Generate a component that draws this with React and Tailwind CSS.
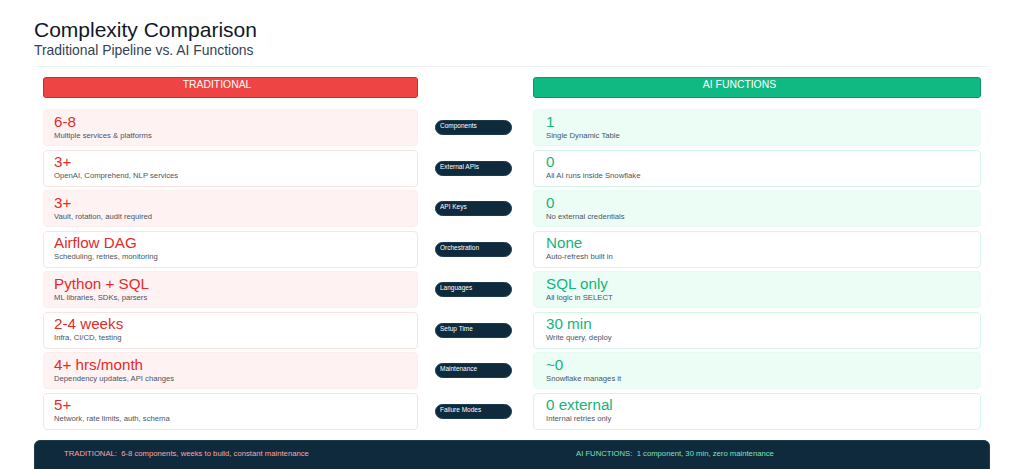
import React from 'react';

const rows = [
  { label: 'Components', old: '6-8', oldNote: 'Multiple services & platforms', ai: '1', aiNote: 'Single Dynamic Table' },
  { label: 'External APIs', old: '3+', oldNote: 'OpenAI, Comprehend, NLP services', ai: '0', aiNote: 'All AI runs inside Snowflake' },
  { label: 'API Keys', old: '3+', oldNote: 'Vault, rotation, audit required', ai: '0', aiNote: 'No external credentials' },
  { label: 'Orchestration', old: 'Airflow DAG', oldNote: 'Scheduling, retries, monitoring', ai: 'None', aiNote: 'Auto-refresh built in' },
  { label: 'Languages', old: 'Python + SQL', oldNote: 'ML libraries, SDKs, parsers', ai: 'SQL only', aiNote: 'All logic in SELECT' },
  { label: 'Setup Time', old: '2-4 weeks', oldNote: 'Infra, CI/CD, testing', ai: '30 min', aiNote: 'Write query, deploy' },
  { label: 'Maintenance', old: '4+ hrs/month', oldNote: 'Dependency updates, API changes', ai: '~0', aiNote: 'Snowflake manages it' },
  { label: 'Failure Modes', old: '5+', oldNote: 'Network, rate limits, auth, schema', ai: '0 external', aiNote: 'Internal retries only' },
];

function Card({ value, note, tinted, side }) {
  const red = side === 'old';
  const box = red
    ? tinted
      ? 'bg-[#fef2f2] border-[#fdeeee]'
      : 'bg-white border-[#fde1e1]'
    : tinted
      ? 'bg-[#ecfdf5] border-[#e6fbf1]'
      : 'bg-white border-[#d3f6e6]';
  return (
    <div className={`h-[37px] rounded border pt-[2.5px] ${red ? 'pl-[10px]' : 'pl-[12px]'} ${box}`}>
      <div className={`text-[15.2px] leading-[18px] ${red ? 'text-[#e42a2a]' : 'text-[#14b47c]'}`}>{value}</div>
      <div className="text-[7.7px] leading-[10px] text-[#4b5563]">{note}</div>
    </div>
  );
}

export default function App() {
  return (
    <div className="w-[1024px] h-[469px] overflow-hidden bg-white font-['Liberation_Sans',Arial,sans-serif]">
      <div className="mx-[34px] w-[956px] pt-[18px]">
        {/* Title */}
        <h1 className="text-[21px] leading-[23px] text-[#111827]">Complexity Comparison</h1>
        <p className="text-[13.9px] leading-[18px] text-[#334155]">Traditional Pipeline vs. AI Functions</p>
        <div className="mt-[7px] h-px bg-[#edf2f3]" />

        {/* Headers */}
        <div className="mt-[10px] flex pl-[9px]">
          <div className="w-[375px] h-[21px] rounded-[3px] border border-[#dc2626] bg-[#ef4444] pr-[27px] text-center text-[10.4px] leading-[14px] text-white">
            TRADITIONAL
          </div>
          <div className="w-[115px]" />
          <div className="w-[448px] h-[21px] rounded-[3px] border border-[#059669] bg-[#10b981] pr-[35px] text-center text-[10.4px] leading-[14px] text-white">
            AI FUNCTIONS
          </div>
        </div>

        {/* Rows */}
        <div className="mt-[11px] flex flex-col gap-[3.5px] pl-[9px]">
          {rows.map((r, i) => (
            <div key={r.label} className="flex items-center">
              <div className="w-[375px]">
                <Card value={r.old} note={r.oldNote} tinted={i % 2 === 0} side="old" />
              </div>
              <div className="w-[115px] pl-[17px]">
                <div className="w-[77px] h-[15px] rounded-full bg-[#0f2a3d] border border-[#1c3a4f] pl-[4px] pt-[1px] text-[6.5px] leading-[8px] text-white">
                  {r.label}
                </div>
              </div>
              <div className="w-[448px]">
                <Card value={r.ai} note={r.aiNote} tinted={i % 2 === 0} side="ai" />
              </div>
            </div>
          ))}
        </div>

        {/* Footer summary */}
        <div className="mt-[10px] flex h-[44px] rounded-md border border-[#1e3a4c] bg-[#0f2a3d] pt-[8px] text-[7.7px] leading-[10px]">
          <div className="w-[541px] pl-[29px] text-[#f8a5a5] whitespace-pre">TRADITIONAL:  6-8 components, weeks to build, constant maintenance</div>
          <div className="text-[#7ee0b8] whitespace-pre">AI FUNCTIONS:  1 component, 30 min, zero maintenance</div>
        </div>
      </div>
    </div>
  );
}
